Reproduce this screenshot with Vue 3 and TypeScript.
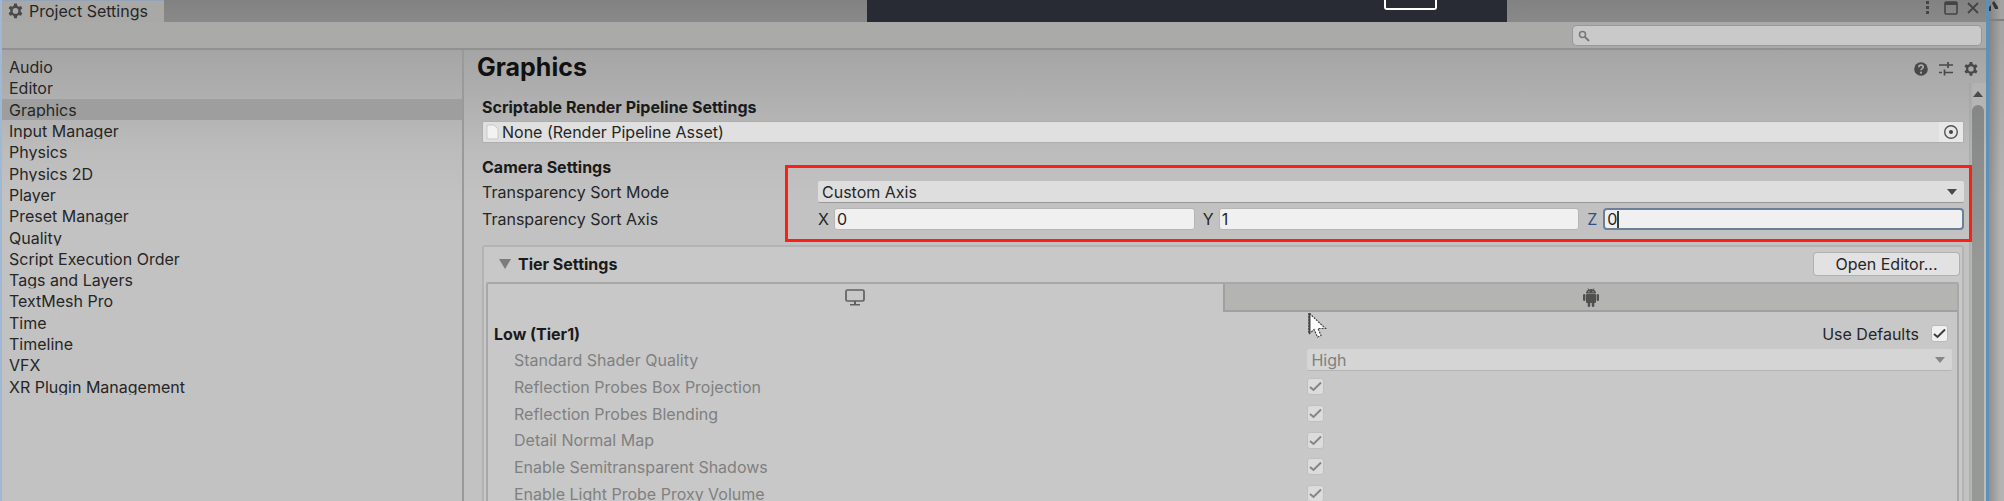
<script setup lang="ts">
import { ref } from 'vue'

const categories: string[] = [
  'Audio', 'Editor', 'Graphics', 'Input Manager', 'Physics', 'Physics 2D', 'Player', 'Preset Manager',
  'Quality', 'Script Execution Order', 'Tags and Layers', 'TextMesh Pro', 'Time', 'Timeline', 'VFX',
  'XR Plugin Management',
]
const selected = ref('Graphics')
const search = ref('')
const pipelineAsset = ref('None (Render Pipeline Asset)')
const sortMode = ref('Custom Axis')
const axes = ref([
  { name: 'X', value: '0', focused: false },
  { name: 'Y', value: '1', focused: false },
  { name: 'Z', value: '0', focused: true },
])
const useDefaults = ref(true)
const shaderQuality = ref('High')
const tierToggles = ref([
  { id: 'box', label: 'Reflection Probes Box Projection', on: true },
  { id: 'blend', label: 'Reflection Probes Blending', on: true },
  { id: 'detail', label: 'Detail Normal Map', on: true },
  { id: 'shadows', label: 'Enable Semitransparent Shadows', on: true },
  { id: 'proxy', label: 'Enable Light Probe Proxy Volume', on: true },
])
const gear =
  'M6.7 0h2.6l.4 2.1 1.4.8 2-.7 1.4 2.3-1.6 1.4v1.8l1.6 1.5-1.4 2.3-2-.7-1.4.8-.4 2.2H6.7l-.4-2.2-1.4-.8-2 .7L1.5 9.2l1.6-1.5V5.9L1.5 4.500l1.4-2.300 2 .7 1.4-.8zM8 4.200a2.700 2.700 0 1 0 0 5.400 2.700 2.700 0 0 0 0-5.400z'
</script>

<template>
  <div class="desktop">
    <div class="window">
      <header class="tabbar">
        <div class="tab">
          <svg class="tab-gear" viewBox="0 0 16 14"><path :d="gear" fill="#4a4a4a" fill-rule="evenodd" /></svg>
          <span>Project Settings</span>
        </div>
        <div class="window-buttons">
          <button type="button" aria-label="More">
            <svg width="4" height="16" viewBox="0 0 4 16" fill="#444"><rect width="3" height="3" y="1" /><rect width="3" height="3" y="6" /><rect width="3" height="3" y="11" /></svg>
          </button>
          <button type="button" aria-label="Maximize">
            <svg width="14" height="14" viewBox="0 0 14 14"><rect x="1" y="1" width="12" height="12" rx="1" fill="none" stroke="#444" stroke-width="1.6" /><rect x="1" y="1" width="12" height="3" fill="#444" /></svg>
          </button>
          <button type="button" aria-label="Close">
            <svg width="14" height="14" viewBox="0 0 14 14"><path d="M2 2l10 10M12 2L2 12" stroke="#444" stroke-width="1.8" /></svg>
          </button>
        </div>
      </header>

      <div class="toolbar">
        <label class="search">
          <svg width="12" height="12" viewBox="0 0 12 12" fill="none" stroke="#777"><circle cx="4.5" cy="4.5" r="3" stroke-width="1.5" /><path d="M7 7l4 4" stroke-width="1.8" /></svg>
          <input v-model="search" type="text" aria-label="Search settings" />
        </label>
      </div>

      <div class="body">
        <nav class="sidebar">
          <div class="categories">
            <button
              v-for="c in categories"
              :key="c"
              type="button"
              class="category"
              :class="{ active: c === selected }"
              @click="selected = c"
            ><span>{{ c }}</span></button>
          </div>
        </nav>

        <main class="panel">
          <div class="panel-head">
            <h1>Graphics</h1>
            <div class="panel-icons">
              <button type="button" aria-label="Help">
                <svg width="16" height="16" viewBox="0 0 16 16"><circle cx="8" cy="8" r="6.8" fill="#484848" /><path d="M5.8 6.3c0-3 4.4-2.8 4.4-.2C10.2 7.6 8 7.7 8 9.3" fill="none" stroke="#aaa" stroke-width="1.7" /><circle cx="8" cy="11.7" r="1.1" fill="#aaa" /></svg>
              </button>
              <button type="button" aria-label="Presets">
                <svg width="16" height="16" viewBox="0 0 16 16" stroke="#484848" stroke-width="1.7" fill="none"><path d="M1 4h8M10 1v6M10 4h5M1 11.5h3M6.5 8.5v6M6.5 11.5H15" /></svg>
              </button>
              <button type="button" aria-label="Options">
                <svg width="16" height="14" viewBox="0 0 16 14"><path :d="gear" fill="#484848" fill-rule="evenodd" /></svg>
              </button>
            </div>
          </div>

          <div class="scroller">
            <div class="content">
              <label class="row heading" for="asset">Scriptable Render Pipeline Settings</label>
              <div class="object-field">
                <svg width="13" height="16" viewBox="0 0 13 16"><path d="M1 1h7l4 4v10H1z" fill="#f2f2f2" stroke="#c9c9c9" /></svg>
                <input id="asset" v-model="pipelineAsset" type="text" readonly />
                <button type="button" aria-label="Pick asset">
                  <svg width="16" height="16" viewBox="0 0 16 16"><circle cx="8" cy="8" r="6.3" fill="none" stroke="#555" stroke-width="1.4" /><circle cx="8" cy="8" r="2" fill="#444" /></svg>
                </button>
              </div>

              <section class="camera">
                <h2 class="row heading">Camera Settings</h2>
                <div class="field">
                  <label for="sort-mode">Transparency Sort Mode</label>
                  <div class="dropdown">
                    <select id="sort-mode" v-model="sortMode">
                      <option>Custom Axis</option>
                    </select>
                    <svg width="10" height="6" viewBox="0 0 10 6"><path d="M0 0h10L5 6z" fill="#4a4a4a" /></svg>
                  </div>
                </div>
                <div class="field">
                  <span>Transparency Sort Axis</span>
                  <div class="axes">
                    <label v-for="a in axes" :key="a.name" class="axis" :class="{ focused: a.focused }">
                      <span>{{ a.name }}</span>
                      <input v-model="a.value" type="text" />
                      <i v-if="a.focused" class="caret"></i>
                    </label>
                  </div>
                </div>
                <div class="highlight"></div>
              </section>

              <section class="tier">
                <div class="tier-head">
                  <svg width="12" height="10" viewBox="0 0 12 10"><path d="M0 0h12L6 10z" fill="#7c7c7c" /></svg>
                  <h2 class="heading">Tier Settings</h2>
                  <button type="button" class="open-editor">Open Editor...</button>
                </div>
                <div class="tier-box">
                  <div class="platforms">
                    <button type="button" class="platform current" aria-label="Standalone">
                      <svg width="20" height="17" viewBox="0 0 20 17"><rect x="1" y="1" width="18" height="11" rx="1.5" fill="none" stroke="#606060" stroke-width="1.7" /><path d="M9 12h2v3h4v1.5H5V15h4z" fill="#606060" /></svg>
                    </button>
                    <button type="button" class="platform" aria-label="Android">
                      <svg width="18" height="19" viewBox="0 0 18 19" fill="#505050"><path d="M4 5.5C4 3.5 5 2.3 6.2 1.7L5.5.5l.6-.3.8 1.2a6 6 0 0 1 4.2 0L11.9.2l.6.3-.7 1.2C13 2.3 14 3.5 14 5.5z" /><rect x="4" y="6" width="10" height="9" rx="1" /><rect x="1" y="6" width="2.4" height="7" rx="1.2" /><rect x="14.6" y="6" width="2.4" height="7" rx="1.2" /><rect x="5.7" y="13" width="2.5" height="6" rx="1.2" /><rect x="9.8" y="13" width="2.5" height="6" rx="1.2" /><circle cx="7" cy="3.7" r=".6" fill="#b4b4b2" /><circle cx="11" cy="3.7" r=".6" fill="#b4b4b2" /></svg>
                    </button>
                  </div>
                  <div class="tier-title">
                    <h3 class="heading">Low (Tier1)</h3>
                    <label class="defaults">
                      <span>Use Defaults</span>
                      <span class="check">
                        <input v-model="useDefaults" type="checkbox" />
                        <svg v-if="useDefaults" viewBox="0 0 17 17"><path d="M3 9l3.5 3L14 4.5" fill="none" stroke="#3c3c3c" stroke-width="2" /></svg>
                      </span>
                    </label>
                  </div>
                  <div class="tier-rows">
                    <div class="tier-row">
                      <label for="quality">Standard Shader Quality</label>
                      <div class="dropdown dim">
                        <select id="quality" v-model="shaderQuality" disabled>
                          <option>High</option>
                        </select>
                        <svg width="10" height="6" viewBox="0 0 10 6"><path d="M0 0h10L5 6z" fill="#868686" /></svg>
                      </div>
                    </div>
                    <div v-for="t in tierToggles" :key="t.id" class="tier-row">
                      <label :for="t.id">{{ t.label }}</label>
                      <span class="check dim">
                        <input :id="t.id" v-model="t.on" type="checkbox" disabled />
                        <svg v-if="t.on" viewBox="0 0 17 17"><path d="M3 9l3.5 3L14 4.5" fill="none" stroke="#858585" stroke-width="2" /></svg>
                      </span>
                    </div>
                  </div>
                </div>
              </section>
            </div>
            <div class="scrollbar">
              <svg width="10" height="6" viewBox="0 0 10 6"><path d="M0 6h10L5 0z" fill="#4a4a4a" /></svg>
              <div class="thumb"></div>
            </div>
          </div>
        </main>
      </div>
    </div>

    <aside class="behind">
      <div class="behind-tab">
        <svg width="10" height="10" viewBox="0 0 10 10"><path d="M3 2l2-2 4 6v2H6zM0 6l2-2v6H0z" fill="#333" /></svg>
      </div>
    </aside>

    <div class="overlay-bar"><div class="overlay-box"></div></div>

    <svg class="cursor" width="19" height="26" viewBox="0 0 19 26"><path d="M1 1v21l5-4.5L9.5 25l3.500-1.500L10 16.500h7.500z" fill="#fff" stroke="#444" stroke-width="1.2" stroke-dasharray="2 1" /><path d="M1.5 1v20" stroke="#444" stroke-width="2" /></svg>
  </div>
</template>

<style>
body {
  margin: 0;
  overflow: hidden;
}
</style>

<style scoped>
* {
  box-sizing: border-box;
}
.desktop {
  position: relative;
  display: flex;
  height: 100vh;
  overflow: hidden;
  font: 400 16px/22px Inter, "Liberation Sans", sans-serif;
  color: #262626;
}
button,
input,
select {
  font: inherit;
  color: inherit;
  border: 0;
  margin: 0;
  padding: 0;
  background: none;
  outline: none;
}
svg {
  display: block;
  flex: none;
}
h1,
h2,
h3 {
  margin: 0;
}
.window {
  flex: 1;
  min-width: 0;
  display: flex;
  flex-direction: column;
  border-left: 2px solid #9fb8d3;
  border-right: 3px solid #5f90b8;
  background: linear-gradient(#a5a5a5 50px, #b2b2b2 110px, #bcbcbc 150px, #c2c2c2 200px);
}
.tabbar {
  display: flex;
  justify-content: space-between;
  height: 22px;
  background: linear-gradient(#828282, #898989);
  flex: none;
}
.tab {
  display: flex;
  align-items: center;
  gap: 5px;
  padding: 0 16px 1px 5px;
  background: #a8a8a7;
  border-top: 1px solid #94a3b8;
}
.tab-gear {
  width: 17px;
  height: 16px;
}
.window-buttons {
  display: flex;
  align-items: center;
  height: 16px;
  gap: 8px;
  padding-right: 6px;
}
.window-buttons button:first-child {
  margin-right: 6px;
}
.toolbar {
  flex: none;
  display: flex;
  justify-content: flex-end;
  padding: 4px 5px 3px;
  height: 28px;
  background: #aaaaa8;
  border-bottom: 2px solid #919191;
}
.search {
  display: flex;
  align-items: center;
  gap: 4px;
  width: 408px;
  height: 19px;
  padding-left: 5px;
  border-radius: 4px;
  background: #c9c9c9;
  box-shadow: 0 0 0 1px #989898;
}
.search input {
  flex: 1;
  min-width: 0;
  height: 19px;
}
.body {
  flex: 1;
  min-height: 0;
  display: flex;
}
.sidebar {
  width: 462px;
  flex: none;
  border-right: 2px solid #9a9a9a;
  padding-top: 6px;
}
.categories {
  display: grid;
  grid-auto-rows: 1fr;
  height: 341px;
}
.category {
  display: flex;
  align-items: flex-start;
  min-height: 0;
  padding-left: 7px;
  text-align: left;
}
.category span {
  line-height: 23px;
  clip-path: inset(0 0 4px 0);
}
.category.active {
  background: #9e9e9e;
}
.panel {
  flex: 1;
  min-width: 0;
  display: flex;
  flex-direction: column;
}
.panel-head {
  flex: none;
  display: flex;
  align-items: center;
  justify-content: space-between;
  height: 33px;
  padding: 0 7px 0 13px;
}
h1 {
  font-size: 25px;
  line-height: 32px;
  font-weight: 700;
  color: #111;
}
.panel-icons {
  display: flex;
  align-items: center;
  gap: 9px;
  padding-top: 4px;
}
.scroller {
  flex: 1;
  min-height: 0;
  display: flex;
}
.content {
  flex: 1;
  min-width: 0;
  padding: 11px 5px 0 18px;
}
.row {
  display: block;
  line-height: 27px;
}
.heading {
  font-size: 16px;
  font-weight: 700;
  color: #1a1a1a;
}
.object-field {
  display: flex;
  align-items: center;
  gap: 3px;
  height: 22px;
  padding-left: 3px;
  background: #e0e0e0;
  border: 1px solid #aeaeae;
  border-radius: 2px;
}
.object-field input {
  flex: 1;
  min-width: 0;
  height: 20px;
}
.object-field button {
  display: grid;
  place-items: center;
  width: 24px;
  height: 20px;
  background: #e8e8e8;
}
.camera {
  position: relative;
  padding-top: 11px;
}
.field {
  display: flex;
  align-items: center;
  height: 22px;
  margin-bottom: 5px;
}
.field > :first-child {
  width: 336px;
  flex: none;
}
.dropdown {
  position: relative;
  flex: 1;
  min-width: 0;
}
.dropdown select {
  display: block;
  appearance: none;
  width: 100%;
  height: 22px;
  padding-left: 4px;
  line-height: 20px;
  background: #dedede;
  border-bottom: 1px solid #989898;
  border-radius: 2px;
}
.dropdown svg {
  position: absolute;
  right: 7px;
  top: 8px;
  pointer-events: none;
}
.dropdown.dim select {
  background: #d5d5d5;
  border-bottom-color: #b4b4b4;
  color: #808080;
  opacity: 1;
}
.axes {
  flex: 1;
  min-width: 0;
  display: grid;
  grid-template-columns: repeat(3, 1fr);
  gap: 8px;
}
.axis {
  position: relative;
  display: flex;
  align-items: center;
}
.axis span {
  width: 16px;
}
.axis input {
  flex: 1;
  min-width: 0;
  height: 22px;
  padding-left: 2px;
  background: #f0f0f0;
  border: 1px solid #b6b6b6;
  border-radius: 3px;
}
.axis.focused span {
  color: #2f4f86;
}
.axis.focused input {
  border: 2px solid #6c7e98;
  border-radius: 4px;
}
.caret {
  position: absolute;
  left: 30px;
  top: 3px;
  width: 2px;
  height: 17px;
  background: #33403a;
}
.highlight {
  position: absolute;
  left: 303px;
  right: -8px;
  top: 22px;
  height: 77px;
  border: 3px solid #fd2012;
  pointer-events: none;
}
.tier {
  margin-top: 15px;
  border: 2px solid #b3b3b3;
  border-radius: 3px;
  background: #c8c8c8;
  padding: 6px 3px 0 2px;
}
.tier-head {
  display: flex;
  align-items: center;
  gap: 7px;
  padding: 0 0 7px 13px;
}
.open-editor {
  margin-left: auto;
  width: 145px;
  height: 22px;
  background: #e2e2e2;
  border-radius: 3px;
  box-shadow: 0 0 0 1px #b0b0b0;
}
.tier-box {
  border: 2px solid #a8a8a8;
  border-radius: 2px;
}
.platforms {
  display: grid;
  grid-template-columns: 1fr 1fr;
}
.platform {
  display: grid;
  place-items: center;
  height: 28px;
  background: #b4b4b2;
  border-left: 2px solid #a0a0a0;
  border-bottom: 2px solid #a0a0a0;
}
.platform.current {
  background: none;
  border-left: 0;
  border-color: transparent;
}
.tier-title {
  display: flex;
  align-items: center;
  justify-content: space-between;
  height: 27px;
  margin-top: 8px;
  padding: 0 9px 0 6px;
}
.defaults {
  display: flex;
  align-items: center;
  gap: 12px;
}
.check {
  position: relative;
  display: block;
  width: 17px;
  height: 17px;
}
.check input {
  display: block;
  appearance: none;
  width: 17px;
  height: 17px;
  background: #f0f0f0;
  border: 1px solid #bababa;
  border-radius: 3px;
}
.check svg {
  position: absolute;
  inset: 0;
  pointer-events: none;
}
.check.dim input {
  background: #dcdcdc;
  border-color: #c0c0c0;
}
.tier-rows {
  display: grid;
  grid-auto-rows: 1fr;
  height: 160px;
  padding: 0 5px 0 26px;
  color: #808080;
}
.tier-row {
  display: grid;
  grid-template-columns: 16fr 13fr;
  align-items: center;
}
.scrollbar {
  width: 17px;
  flex: none;
  display: flex;
  flex-direction: column;
  align-items: center;
  gap: 8px;
  padding-top: 8px;
  background: linear-gradient(90deg, #9a9a9a88, #b8b8b888 4px);
}
.thumb {
  flex: 1;
  width: 12px;
  border-radius: 6px 6px 0 0;
  background: linear-gradient(#858786, #979997 160px);
}
.behind {
  width: 15px;
  flex: none;
  background: linear-gradient(90deg, #0003, #0000 12px), linear-gradient(#a2a2a2, #b4b4b4 200px);
}
.behind-tab {
  height: 21px;
  padding-top: 1px;
  border-bottom: 2px solid #808080;
}
.overlay-bar {
  position: absolute;
  top: 0;
  left: 867px;
  width: 640px;
  height: 22px;
  background: #282b33;
}
.overlay-box {
  width: 53px;
  height: 10px;
  margin-left: 517px;
  border: 2px solid #fff;
  border-top: 0;
  border-radius: 0 0 3px 3px;
}
.cursor {
  position: absolute;
  left: 1308px;
  top: 312px;
}
</style>
